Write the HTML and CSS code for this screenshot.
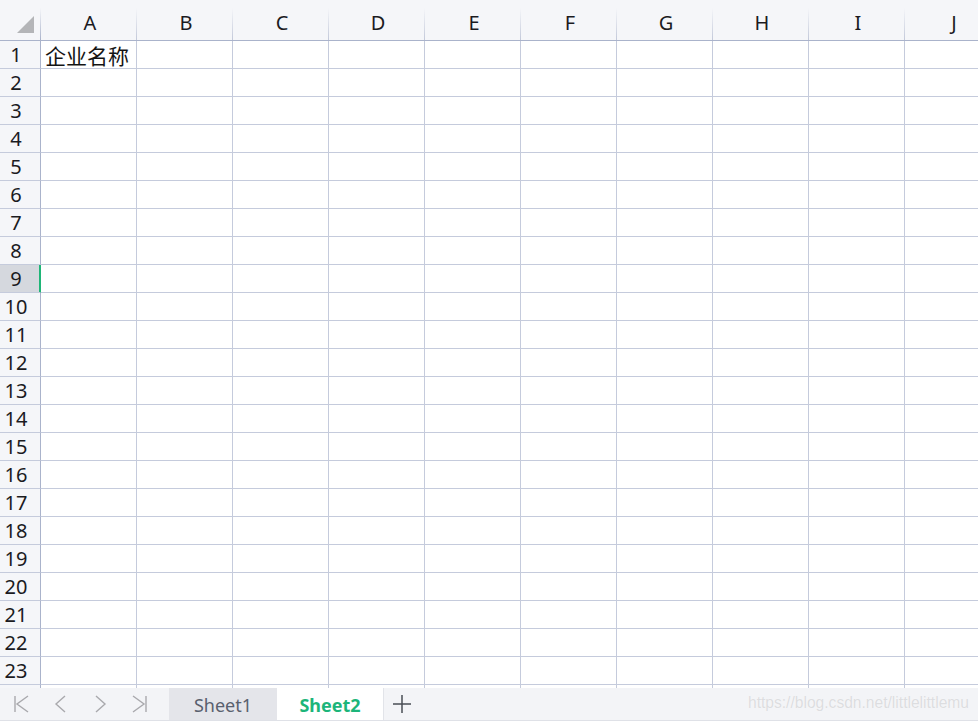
FILE: index.html
```html
<!DOCTYPE html>
<html lang="zh-CN">
<head>
    <meta charset="UTF-8">
    <title>Sheet2</title>
    <link rel="stylesheet" href="styles.css">
</head>
<body>
    <div class="sheet" id="sheet"></div>

    <div class="tab-bar">
        <div class="tab-nav">
            <span class="nav-btn">
                <svg width="18" height="18" viewBox="0 0 18 18"><path d="M2 1v16M15 1L4 9l11 8" fill="none" stroke="#a9a9ad" stroke-width="1.4"/></svg>
            </span>
            <span class="nav-btn">
                <svg width="18" height="18" viewBox="0 0 18 18"><path d="M13 1L4 9l9 8" fill="none" stroke="#a9a9ad" stroke-width="1.4"/></svg>
            </span>
            <span class="nav-btn">
                <svg width="18" height="18" viewBox="0 0 18 18"><path d="M5 1l9 8-9 8" fill="none" stroke="#a9a9ad" stroke-width="1.4"/></svg>
            </span>
            <span class="nav-btn">
                <svg width="18" height="18" viewBox="0 0 18 18"><path d="M3 1l11 8-11 8M16 1v16" fill="none" stroke="#a9a9ad" stroke-width="1.4"/></svg>
            </span>
        </div>
        <div class="tab">Sheet1</div>
        <div class="tab tab-active">Sheet2</div>
        <div class="tab-add">
            <svg width="20" height="20" viewBox="0 0 20 20"><path d="M10 1v18M1 10h18" fill="none" stroke="#4a4d55" stroke-width="1.5"/></svg>
        </div>
        <div class="watermark">https://blog.csdn.net/littlelittlemu</div>
    </div>

    <script>
        const COLS = ['A', 'B', 'C', 'D', 'E', 'F', 'G', 'H', 'I', 'J'];
        const ROWS = 23;
        const ACTIVE_ROW = 9;
        const sheet = document.getElementById('sheet');

        function cell(cls, text) {
            const el = document.createElement('div');
            el.className = cls;
            if (text) el.textContent = text;
            sheet.appendChild(el);
        }

        // header row
        cell('corner');
        COLS.forEach(c => cell('col-head', c));

        // one extra row peeks out under the last full one, without a label
        for (let r = 1; r <= ROWS + 1; r++) {
            const label = r <= ROWS ? String(r) : '';
            cell(r === ACTIVE_ROW ? 'row-head active' : 'row-head', label);
            COLS.forEach((c, i) => {
                cell('cell', r === 1 && i === 0 ? '企业名称' : '');
            });
        }
    </script>
</body>
</html>
```

FILE: styles.css
```css
* { margin: 0; padding: 0; box-sizing: border-box; }
html, body { width: 978px; height: 723px; overflow: hidden; background: #fff; }
body {
    font-family: "Noto Sans", "Noto Sans CJK SC", sans-serif;
    color: #1b1b1f;
}
.sheet {
    display: grid;
    grid-template-columns: 41px repeat(10, 96px);
    grid-template-rows: 41px;
    grid-auto-rows: 28px;
    height: 688px;
    overflow: hidden;
}
.corner {
    position: relative;
    background: linear-gradient(to bottom, rgba(170, 180, 205, 0) 8px, #aab3cb) right top / 1px 100% no-repeat, #f5f6f9;
    border-bottom: 1px solid #aab3cb;
}
.corner::after {
    content: "";
    position: absolute;
    left: 17px; top: 16px;
    width: 17px; height: 17px;
    background: #b4b5b8;
    clip-path: polygon(100% 0, 100% 100%, 0 100%);
}
.col-head {
    background: linear-gradient(to bottom, rgba(170, 180, 205, 0) 8px, #c3c9da) right top / 1px 100% no-repeat, #f5f6f9;
    border-bottom: 1px solid #aab3cb;
    font-size: 20px;
    text-align: center;
    padding-top: 9px;
    padding-left: 2px;
    line-height: 28px;
}
.row-head {
    background: #f5f6f9;
    border-right: 1px solid #aab3cb;
    border-bottom: 1px solid #c5cbdc;
    font-size: 20px;
    line-height: 27px;
    text-align: center;
    padding-right: 8px;
}
.row-head.active {
    background: #d5d8de;
    border-right-color: #1fb577;
    box-shadow: inset -1px 0 #1fb577;
}
.cell {
    border-right: 1px solid #c5cbdc;
    border-bottom: 1px solid #c5cbdc;
    font-family: "Noto Sans CJK SC", sans-serif;
    font-size: 21px;
    line-height: 28px;
    padding-left: 4px;
    white-space: nowrap;
    color: #141414;
}
.tab-bar {
    position: relative;
    display: flex;
    height: 33px;
    background: #f3f4f7;
    border-bottom: 1px solid #dfe1e7;
}
.tab-nav { display: flex; padding-left: 2px; width: 169px; }
.nav-btn {
    width: 39px;
    display: flex;
    align-items: center;
    justify-content: center;
}
.tab {
    width: 108px;
    display: flex;
    align-items: center;
    justify-content: center;
    background: #e4e5ea;
    color: #59606e;
    font-size: 18px;
    padding-top: 1px;
}
.tab-active {
    width: 106px;
    background: #fff;
    color: #1cb57a;
    font-weight: 700;
}
.tab-add {
    width: 37px;
    display: flex;
    align-items: center;
    justify-content: center;
    border-left: 1px solid #e2e4e9;
}
.watermark {
    position: absolute;
    right: 9px; top: 6px;
    font-family: "Liberation Sans", Arial, sans-serif;
    font-size: 15.6px;
    color: #dcdde0;
    text-shadow: 0 0 1px #fff;
    white-space: nowrap;
}
```
